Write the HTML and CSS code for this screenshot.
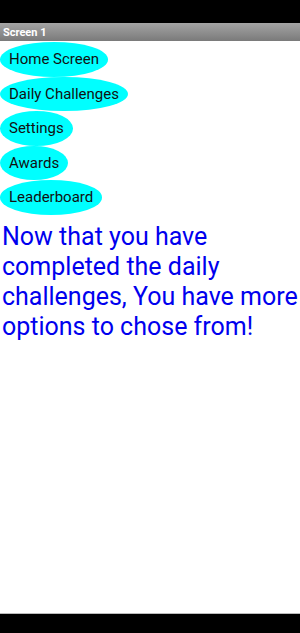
FILE: index.html
```html
<!DOCTYPE html>
<html>
<head>
<meta charset="utf-8">
<link rel="stylesheet" href="styles.css">
</head>
<body>
<div class="phone">
  <div class="status"></div>
  <div class="titlebar">Screen 1</div>
  <div class="content">
    <div class="buttons">
      <div class="btn">Home Screen</div>
      <div class="btn">Daily Challenges</div>
      <div class="btn">Settings</div>
      <div class="btn">Awards</div>
      <div class="btn">Leaderboard</div>
    </div>
    <p class="message">Now that you have completed the daily challenges, You have more options to chose from!</p>
  </div>
  <div class="navbar"></div>
</div>
</body>
</html>
```

FILE: styles.css
```css
html, body {
  margin: 0;
  padding: 0;
  background: #fff;
}
.phone {
  width: 300px;
  height: 633px;
  display: flex;
  flex-direction: column;
  font-family: Roboto, "Liberation Sans", sans-serif;
}
.status {
  height: 23px;
  background: #000;
}
.titlebar {
  height: 18px;
  background: linear-gradient(#a4a4a4, #7a7a7a);
  color: #fff;
  font-weight: bold;
  font-size: 11px;
  line-height: 19px;
  padding-left: 3px;
  box-sizing: border-box;
}
.content {
  flex: 1;
  display: flex;
  flex-direction: column;
  padding-top: 1px;
}
.buttons {
  display: flex;
  flex-direction: column;
  align-items: flex-start;
}
.btn {
  background: #00ffff;
  border-radius: 50%;
  height: 34.5px;
  line-height: 34px;
  padding: 0 9px;
  font-size: 15px;
  color: #111;
}
.message {
  margin: 7px 0 0 2px;
  color: #0000ee;
  font-size: 25px;
  line-height: 30px;
}
.navbar {
  height: 19px;
  background: #000;
  border-top: 1px solid #bbb;
}
```
